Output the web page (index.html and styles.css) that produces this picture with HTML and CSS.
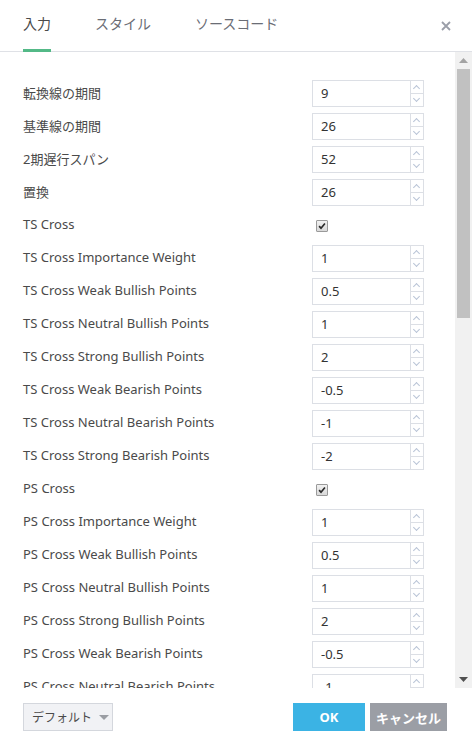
FILE: index.html
```html
<!DOCTYPE html>
<html lang="ja">
<head>
<meta charset="utf-8">
<link rel="stylesheet" href="styles.css">
</head>
<body>
<div class="dialog">
  <div class="header">
    <div class="tabs">
      <div class="tab active">入力</div>
      <div class="tab">スタイル</div>
      <div class="tab">ソースコード</div>
    </div>
    <div class="close">
      <svg width="10" height="10" viewBox="0 0 10 10"><path d="M1 1L9 9M9 1L1 9" stroke="#9a9ea8" stroke-width="1.8"/></svg>
    </div>
  </div>
  <div class="body">
    <div class="content">
      <div class="row"><div class="label">転換線の期間</div><div class="num"><span class="val">9</span><span class="spin"><i class="up"></i><i class="down"></i></span></div></div>
      <div class="row"><div class="label">基準線の期間</div><div class="num"><span class="val">26</span><span class="spin"><i class="up"></i><i class="down"></i></span></div></div>
      <div class="row"><div class="label">2期遅行スパン</div><div class="num"><span class="val">52</span><span class="spin"><i class="up"></i><i class="down"></i></span></div></div>
      <div class="row"><div class="label">置換</div><div class="num"><span class="val">26</span><span class="spin"><i class="up"></i><i class="down"></i></span></div></div>
      <div class="row"><div class="label">TS Cross</div><div class="check"><svg width="12" height="12" viewBox="0 0 12 12"><path d="M2.5 6.2L4.8 8.6L9.5 3" fill="none" stroke="#2a2a2a" stroke-width="2"/></svg></div></div>
      <div class="row"><div class="label">TS Cross Importance Weight</div><div class="num"><span class="val">1</span><span class="spin"><i class="up"></i><i class="down"></i></span></div></div>
      <div class="row"><div class="label">TS Cross Weak Bullish Points</div><div class="num"><span class="val">0.5</span><span class="spin"><i class="up"></i><i class="down"></i></span></div></div>
      <div class="row"><div class="label">TS Cross Neutral Bullish Points</div><div class="num"><span class="val">1</span><span class="spin"><i class="up"></i><i class="down"></i></span></div></div>
      <div class="row"><div class="label">TS Cross Strong Bullish Points</div><div class="num"><span class="val">2</span><span class="spin"><i class="up"></i><i class="down"></i></span></div></div>
      <div class="row"><div class="label">TS Cross Weak Bearish Points</div><div class="num"><span class="val">-0.5</span><span class="spin"><i class="up"></i><i class="down"></i></span></div></div>
      <div class="row"><div class="label">TS Cross Neutral Bearish Points</div><div class="num"><span class="val">-1</span><span class="spin"><i class="up"></i><i class="down"></i></span></div></div>
      <div class="row"><div class="label">TS Cross Strong Bearish Points</div><div class="num"><span class="val">-2</span><span class="spin"><i class="up"></i><i class="down"></i></span></div></div>
      <div class="row"><div class="label">PS Cross</div><div class="check"><svg width="12" height="12" viewBox="0 0 12 12"><path d="M2.5 6.2L4.8 8.6L9.5 3" fill="none" stroke="#2a2a2a" stroke-width="2"/></svg></div></div>
      <div class="row"><div class="label">PS Cross Importance Weight</div><div class="num"><span class="val">1</span><span class="spin"><i class="up"></i><i class="down"></i></span></div></div>
      <div class="row"><div class="label">PS Cross Weak Bullish Points</div><div class="num"><span class="val">0.5</span><span class="spin"><i class="up"></i><i class="down"></i></span></div></div>
      <div class="row"><div class="label">PS Cross Neutral Bullish Points</div><div class="num"><span class="val">1</span><span class="spin"><i class="up"></i><i class="down"></i></span></div></div>
      <div class="row"><div class="label">PS Cross Strong Bullish Points</div><div class="num"><span class="val">2</span><span class="spin"><i class="up"></i><i class="down"></i></span></div></div>
      <div class="row"><div class="label">PS Cross Weak Bearish Points</div><div class="num"><span class="val">-0.5</span><span class="spin"><i class="up"></i><i class="down"></i></span></div></div>
      <div class="row"><div class="label">PS Cross Neutral Bearish Points</div><div class="num"><span class="val">-1</span><span class="spin"><i class="up"></i><i class="down"></i></span></div></div>
    </div>
    <div class="scrollbar">
      <div class="sb-btn"><svg width="9" height="5" viewBox="0 0 9 5"><path d="M0 5L4.5 0L9 5Z" fill="#a3a3a3"/></svg></div>
      <div class="sb-track"><div class="sb-thumb"></div></div>
      <div class="sb-btn"><svg width="9" height="5" viewBox="0 0 9 5"><path d="M0 0L4.5 5L9 0Z" fill="#505050"/></svg></div>
    </div>
  </div>
  <div class="footer">
    <div class="defaults"><span class="dtext">デフォルト</span><span class="caret"></span></div>
    <div class="actions">
      <div class="btn ok">OK</div>
      <div class="btn cancel">キャンセル</div>
    </div>
  </div>
</div>
</body>
</html>
```
FILE: styles.css
```css
* { box-sizing: border-box; }
html, body { margin: 0; padding: 0; background: #fff; }
body {
  font-family: "Noto Sans", "Noto Sans CJK JP", sans-serif;
  font-size: 13px;
  color: #4a4a4a;
}
.dialog {
  width: 472px;
  height: 756px;
  display: flex;
  flex-direction: column;
  background: #fff;
}
.header {
  height: 52px;
  flex: none;
  display: flex;
  justify-content: space-between;
  border-bottom: 1px solid #dfe1e6;
  padding: 0 21px 0 23px;
}
.tabs { display: flex; gap: 44px; }
.tab {
  font-size: 14px;
  line-height: 20px;
  color: #6a6d75;
  padding-top: 14px;
  position: relative;
}
.tab.active { color: #4a4a4a; }
.tab.active::after {
  content: "";
  position: absolute;
  left: 0;
  right: 0;
  bottom: -1px;
  height: 3px;
  background: #53b987;
}
.close { padding-top: 17px; }
.body {
  flex: none;
  height: 636px;
  display: flex;
  overflow: hidden;
}
.content {
  flex: 1;
  padding: 28px 31px 0 23px;
  display: flex;
  flex-direction: column;
  gap: 6px;
  overflow: hidden;
}
.row {
  flex: none;
  height: 27px;
  display: flex;
  align-items: center;
  justify-content: space-between;
}
.label { white-space: nowrap; padding-bottom: 3px; }
.num {
  width: 112px;
  height: 27px;
  border: 1px solid #dcdfe5;
  display: flex;
}
.val {
  flex: 1;
  padding-left: 8px;
  line-height: 25px;
  color: #333;
}
.spin {
  width: 13px;
  border-left: 1px solid #dcdfe5;
  display: flex;
  flex-direction: column;
}
.spin i {
  flex: 1;
  display: block;
  position: relative;
}
.spin i.up { border-bottom: 1px solid #dcdfe5; }
.spin i::before {
  content: "";
  position: absolute;
  left: 3px;
  width: 4px;
  height: 4px;
  border-left: 1px solid #b9c4d6;
  border-top: 1px solid #b9c4d6;
}
.spin i.up::before { top: 5px; transform: rotate(45deg); }
.spin i.down::before { top: 2px; transform: rotate(-135deg); }
.check {
  width: 112px;
  padding-left: 4px;
  height: 27px;
  display: flex;
  align-items: center;
}
.check svg {
  width: 12px;
  height: 12px;
  border: 1px solid #9a9a9a;
  border-radius: 1px;
  background: linear-gradient(#f1f1f1, #d9d9d9);
}
.scrollbar {
  width: 17px;
  flex: none;
  background: #f1f1f1;
  display: flex;
  flex-direction: column;
  height: 636px;
}
.sb-btn {
  height: 17px;
  display: flex;
  align-items: center;
  justify-content: center;
  flex: none;
}
.sb-track {
  flex: 1;
  padding: 0 2px;
}
.sb-thumb {
  height: 249px;
  background: #c1c1c1;
}
.footer {
  flex: 1;
  display: flex;
  justify-content: space-between;
  align-items: flex-start;
  padding: 15px 25px 0 23px;
}
.defaults {
  width: 90px;
  height: 28px;
  border: 1px solid #d4d7dd;
  background: #f1f2f5;
  display: flex;
  align-items: center;
  padding-left: 8px;
  gap: 7px;
  font-size: 12px;
  color: #4a4a4a;
  white-space: nowrap;
}
.caret {
  flex: none;
  width: 0;
  height: 0;
  border-left: 5px solid transparent;
  border-right: 5px solid transparent;
  border-top: 5px solid #9a9da3;
}
.actions { display: flex; gap: 5px; }
.btn {
  height: 28px;
  display: flex;
  align-items: center;
  justify-content: center;
  color: #fff;
  font-weight: bold;
  font-size: 13px;
}
.ok { width: 72px; background: #3bb3e4; }
.cancel { width: 77px; background: #9b9ea5; }
```
